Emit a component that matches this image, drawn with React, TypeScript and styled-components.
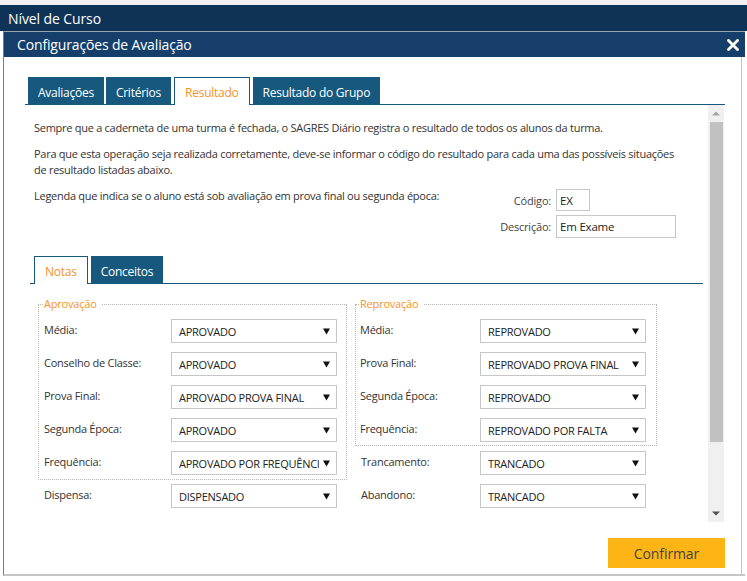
import React from "react";
import styled, { createGlobalStyle, css } from "styled-components";

const GlobalStyle = createGlobalStyle`
  html, body { margin: 0; padding: 0; background: #ffffff; }
  body { font-family: "Open Sans", "Noto Sans", "DejaVu Sans", sans-serif; }
  * { box-sizing: border-box; }
`;

const Page = styled.div`
  width: 747px;
  height: 581px;
  overflow: hidden;
  background: #ffffff;
  border-top: 5px solid #f0f0f0;
`;

const OuterBar = styled.div`
  height: 26px;
  background: #0f3356;
  color: #ffffff;
  font-size: 14px;
  letter-spacing: -0.1px;
  display: flex;
  align-items: center;
  padding-left: 8px;
`;

const Dialog = styled.div`
  margin-left: 3px;
  width: 742px;
  border-left: 1px solid #6f7f8f;
  border-top: 1px solid #9aa4ae;
  border-bottom: 2px solid #c6c6c6;
`;

const DialogHeader = styled.div`
  height: 25px;
  background: #153f6a;
  color: #ffffff;
  font-size: 14px;
  letter-spacing: -0.15px;
  display: flex;
  align-items: center;
  justify-content: space-between;
  padding: 0 6px 0 13px;
`;

const Body = styled.div`
  margin-right: 3px;
  border-right: 1px solid #c4c4c4;
  padding: 20px 16px 0 21px;
`;

const TabBar = styled.div<{ $inset?: number }>`
  display: flex;
  gap: 2px;
  height: 28px;
  padding-left: 3px;
  border-bottom: 1px solid #17597e;
  margin: 0 ${(p) => p.$inset ?? 0}px;
`;

const Tab = styled.div<{ $active?: boolean }>`
  height: 27px;
  padding: 3px 10px 0;
  display: flex;
  align-items: center;
  font-size: 12px;
  letter-spacing: -0.25px;
  color: #ffffff;
  background: #17597e;
  white-space: nowrap;
  ${(p) =>
    p.$active &&
    css`
      background: #ffffff;
      color: #f7931e;
      border: 1px solid #17597e;
      border-bottom: none;
      height: 28px;
      padding: 2px 10px 0;
      margin: 0 1px;
    `}
`;

const ContentArea = styled.div`
  display: flex;
  height: 417px;
`;

const Pane = styled.div`
  flex: 1;
  padding-top: 15px;
  overflow: hidden;
`;

const Paragraph = styled.p`
  margin: 0 0 10px 9px;
  font-size: 11px;
  letter-spacing: -0.27px;
  line-height: 16px;
  color: #333333;
  white-space: nowrap;
`;

const InfoRow = styled.div`
  display: flex;
  justify-content: space-between;
  align-items: flex-start;
`;

const FieldGrid = styled.div`
  display: grid;
  grid-template-columns: 55px auto;
  column-gap: 5px;
  row-gap: 4px;
  align-items: center;
  margin: 1px 32px 0 0;
`;

const FieldLabel = styled.span`
  font-size: 11px;
  letter-spacing: -0.2px;
  color: #444444;
  text-align: right;
  white-space: nowrap;
`;

const TextInput = styled.input<{ $w: number; $h: number }>`
  width: ${(p) => p.$w}px;
  height: ${(p) => p.$h}px;
  border: 1px solid #c8c8c8;
  padding: 0 3px;
  font-family: inherit;
  font-size: 11.5px;
  letter-spacing: -0.2px;
  color: #222222;
  outline: none;
  background: #ffffff;
`;

const InnerTabs = styled.div`
  margin-top: 18px;
`;

const Groups = styled.div`
  display: flex;
  gap: 8px;
  margin: 12px 0 0 13px;
  align-items: flex-start;
`;

const Column = styled.div<{ $w: number }>`
  width: ${(p) => p.$w}px;
  display: flex;
  flex-direction: column;
`;

const Group = styled.fieldset<{ $pl: number; $pb: number }>`
  margin: 0;
  min-width: 0;
  border: 1px dotted #b5b5b5;
  padding: 7px 9px ${(p) => p.$pb}px ${(p) => p.$pl}px;
  display: flex;
  flex-direction: column;
  gap: 9px;
`;

const Legend = styled.legend`
  padding: 0 5px 0 0;
  font-size: 11px;
  letter-spacing: -0.2px;
  line-height: 16px;
  color: #f7931e;
`;

const Outside = styled.div<{ $pl: number; $mt: number }>`
  display: flex;
  flex-direction: column;
  gap: 9px;
  padding-left: ${(p) => p.$pl}px;
  margin-top: ${(p) => p.$mt}px;
`;

const Row = styled.div`
  display: flex;
  align-items: flex-start;
`;

const RowLabel = styled.span<{ $w: number }>`
  width: ${(p) => p.$w}px;
  flex: none;
  padding-top: 3px;
  font-size: 11px;
  letter-spacing: -0.25px;
  line-height: 16px;
  color: #333333;
  white-space: nowrap;
`;

const SelectBox = styled.div`
  width: 166px;
  height: 24px;
  flex: none;
  border: 1px solid #c6c6c6;
  display: flex;
  align-items: center;
  gap: 4px;
  padding: 1px 6px 0 7px;
  font-size: 11px;
  letter-spacing: -0.25px;
  color: #222222;
  background: #ffffff;
`;

const SelectText = styled.span`
  flex: 1;
  min-width: 0;
  overflow: hidden;
  white-space: nowrap;
`;

const Scrollbar = styled.div`
  width: 16px;
  margin-right: 1px;
  background: #f0f0f0;
  display: flex;
  flex-direction: column;
  align-items: center;
`;

const ScrollButton = styled.div`
  height: 17px;
  width: 100%;
  display: flex;
  align-items: center;
  justify-content: center;
  flex: none;
`;

const Thumb = styled.div`
  width: 13px;
  height: 320px;
  margin-left: 1px;
  background: #c1c1c1;
  flex: none;
`;

const Spacer = styled.div`
  flex: 1;
`;

const Footer = styled.div`
  height: 52px;
  display: flex;
  justify-content: flex-end;
  align-items: flex-start;
  padding-top: 16px;
`;

const ConfirmButton = styled.button`
  width: 117px;
  height: 30px;
  border: none;
  background: #fdb515;
  color: #444444;
  font-family: inherit;
  font-size: 14px;
  letter-spacing: -0.1px;
  padding: 0;
`;

const Arrow = () => (
  <svg width="7" height="7" viewBox="0 0 7 7">
    <polygon points="0,0.5 7,0.5 3.5,6.5" fill="#111" />
  </svg>
);

const CloseIcon = () => (
  <svg width="12" height="12" viewBox="0 0 12 12">
    <path d="M1.5 1.5 L10.5 10.5 M10.5 1.5 L1.5 10.5" stroke="#fff" strokeWidth="2.8" strokeLinecap="square" />
  </svg>
);

const Select = ({ value }: { value: string }) => (
  <SelectBox>
    <SelectText>{value}</SelectText>
    <Arrow />
  </SelectBox>
);

const Field = ({ label, value, w }: { label: string; value: string; w: number }) => (
  <Row>
    <RowLabel $w={w}>{label}</RowLabel>
    <Select value={value} />
  </Row>
);

export default function App() {
  return (
    <>
      <GlobalStyle />
      <Page>
        <OuterBar>Nível de Curso</OuterBar>
        <Dialog>
          <DialogHeader>
            <span>Configurações de Avaliação</span>
            <CloseIcon />
          </DialogHeader>
          <Body>
            <TabBar>
              <Tab>Avaliações</Tab>
              <Tab>Critérios</Tab>
              <Tab $active>Resultado</Tab>
              <Tab>Resultado do Grupo</Tab>
            </TabBar>
            <ContentArea>
              <Pane>
                <Paragraph>
                  Sempre que a caderneta de uma turma é fechada, o SAGRES Diário registra o resultado de todos os alunos da turma.
                </Paragraph>
                <Paragraph>
                  Para que esta operação seja realizada corretamente, deve-se informar o código do resultado para cada uma das possíveis situações
                  <br />
                  de resultado listadas abaixo.
                </Paragraph>
                <InfoRow>
                  <Paragraph>
                    Legenda que indica se o aluno está sob avaliação em prova final ou segunda época:
                  </Paragraph>
                  <FieldGrid>
                    <FieldLabel>Código:</FieldLabel>
                    <TextInput $w={34} $h={22} defaultValue="EX" readOnly />
                    <FieldLabel>Descrição:</FieldLabel>
                    <TextInput $w={120} $h={23} defaultValue="Em Exame" readOnly />
                  </FieldGrid>
                </InfoRow>
                <InnerTabs>
                  <TabBar $inset={5}>
                    <Tab $active>Notas</Tab>
                    <Tab>Conceitos</Tab>
                  </TabBar>
                </InnerTabs>
                <Groups>
                  <Column $w={309}>
                    <Group $pl={5} $pb={4}>
                      <Legend>Aprovação</Legend>
                      <Field w={127} label="Média:" value="APROVADO" />
                      <Field w={127} label="Conselho de Classe:" value="APROVADO" />
                      <Field w={127} label="Prova Final:" value="APROVADO PROVA FINAL" />
                      <Field w={127} label="Segunda Época:" value="APROVADO" />
                      <Field w={127} label="Frequência:" value="APROVADO POR FREQUÊNCIA" />
                    </Group>
                    <Outside $pl={6} $mt={4}>
                      <Field w={127} label="Dispensa:" value="DISPENSADO" />
                    </Outside>
                  </Column>
                  <Column $w={302}>
                    <Group $pl={4} $pb={3}>
                      <Legend>Reprovação</Legend>
                      <Field w={120} label="Média:" value="REPROVADO" />
                      <Field w={120} label="Prova Final:" value="REPROVADO PROVA FINAL" />
                      <Field w={120} label="Segunda Época:" value="REPROVADO" />
                      <Field w={120} label="Frequência:" value="REPROVADO POR FALTA" />
                    </Group>
                    <Outside $pl={6} $mt={5}>
                      <Field w={119} label="Trancamento:" value="TRANCADO" />
                      <Field w={119} label="Abandono:" value="TRANCADO" />
                    </Outside>
                  </Column>
                </Groups>
              </Pane>
              <Scrollbar>
                <ScrollButton>
                  <svg width="8" height="5" viewBox="0 0 8 5">
                    <polygon points="0,4.5 8,4.5 4,0.5" fill="#a3a3a3" />
                  </svg>
                </ScrollButton>
                <Thumb />
                <Spacer />
                <ScrollButton>
                  <svg width="8" height="5" viewBox="0 0 8 5">
                    <polygon points="0,0.5 8,0.5 4,4.5" fill="#505050" />
                  </svg>
                </ScrollButton>
              </Scrollbar>
            </ContentArea>
            <Footer>
              <ConfirmButton>Confirmar</ConfirmButton>
            </Footer>
          </Body>
        </Dialog>
      </Page>
    </>
  );
}
